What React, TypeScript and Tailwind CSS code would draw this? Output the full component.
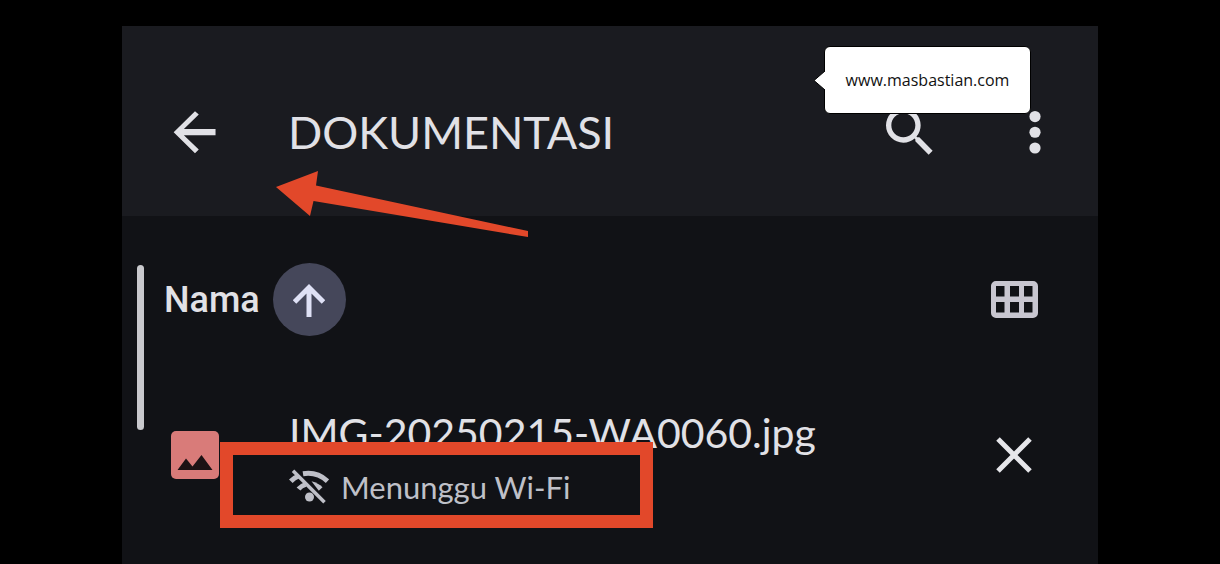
interface FileItem {
  name: string;
  status: string;
}

const FILES: FileItem[] = [{ name: 'IMG-20250215-WA0060.jpg', status: 'Menunggu Wi-Fi' }];

function ArrowBackIcon() {
  return (
    <svg className="size-16" viewBox="0 0 24 24" fill="currentColor" aria-hidden="true">
      <path d="M19.7 10.900H7.83l5.59-5.490L12 4.200l-8 7.900 8 7.900 1.41-1.41L7.83 13.200H19.7z" />
    </svg>
  );
}

function SearchIcon() {
  return (
    <svg className="size-16" viewBox="0 0 24 24" fill="currentColor" aria-hidden="true">
      <path d="M15.5 14h-.79l-.28-.27A6.471 6.471 0 0 0 16 9.5 6.5 6.5 0 1 0 9.5 16c1.61 0 3.09-.59 4.23-1.57l.27.28v.79l5 4.99L20.49 19l-4.99-5zm-6 0C7.01 14 5 11.99 5 9.5S7.01 5 9.5 5 14 7.01 14 9.5 11.99 14 9.5 14z" />
    </svg>
  );
}

function MoreIcon() {
  return (
    <svg className="size-16" viewBox="0 0 24 24" fill="currentColor" aria-hidden="true">
      <circle cx="12" cy="6.200" r="2.100" />
      <circle cx="12" cy="12.100" r="2.100" />
      <circle cx="12" cy="18" r="2.100" />
    </svg>
  );
}

function ArrowUpIcon() {
  return (
    <svg className="h-[34px] w-8" viewBox="0 0 32 34" fill="none" stroke="currentColor" strokeWidth="5" aria-hidden="true">
      <path d="M16 34V4M1.500 19L16 4.500L30.500 19" />
    </svg>
  );
}

function GridIcon() {
  return (
    <svg className="h-[38px] w-12" viewBox="0 0 48 38" fill="currentColor" aria-hidden="true">
      <path
        fillRule="evenodd"
        d="M6 0h37a5 5 0 0 1 5 5v27a5 5 0 0 1-5 5H6a5 5 0 0 1-5-5V5a5 5 0 0 1 5-5zM6 5v10.500h8.500V5zM20 5v10.500h9V5zM34 5v10.500h8.500V5zM6 21v10.500h8.500V21zM20 21v10.500h9V21zM34 21v10.500h8.500V21z"
      />
    </svg>
  );
}

function CloseIcon() {
  return (
    <svg className="size-9" viewBox="0 0 36 36" fill="none" stroke="currentColor" strokeWidth="5" aria-hidden="true">
      <path d="M2 2l32 32M34 2L2 34" />
    </svg>
  );
}

function ImageIcon() {
  return (
    <svg className="size-12" viewBox="0 0 48 48" aria-hidden="true">
      <rect width="48" height="48" rx="5" fill="#d97b79" />
      <path d="M6.500 39l8.500-11.500 6.500 8L30.500 24 41.500 39z" fill="#1c1214" />
    </svg>
  );
}

function WifiOffIcon() {
  return (
    <svg className="h-9 w-10" viewBox="0 0 40 36" aria-hidden="true">
      <g fill="none" stroke="currentColor" strokeWidth="5">
        <path d="M14 4.800Q28 2.500 38.500 12.200" />
        <path d="M1.800 12.200Q5 8.800 9.500 7" />
        <path d="M9.500 20Q12 17 16.500 15.500" />
      </g>
      <path d="M22.500 12.200Q29.500 14 33.500 18.200L29.800 21.800z" fill="currentColor" />
      <circle cx="20.500" cy="28" r="4.500" fill="currentColor" />
      <path d="M4 1.800L35.500 33.300" stroke="currentColor" strokeWidth="3.500" />
    </svg>
  );
}

function Callout() {
  return (
    <div className="absolute top-5 right-[67px] flex h-[68px] w-[207px] items-center justify-center rounded-md border border-black bg-white">
      <svg className="absolute top-[21px] -left-3 h-6 w-3" viewBox="0 0 12 24" aria-hidden="true">
        <path d="M12 3L1 12.500L12 22z" fill="#fff" />
        <path d="M12 3L1 12.500L12 22" fill="none" stroke="#000" strokeWidth="1" />
      </svg>
      <a href="#site" className="font-['Open_Sans',sans-serif] text-base text-[#111111]">
        www.masbastian.com
      </a>
    </div>
  );
}

function FileRow({ file }: { file: FileItem }) {
  return (
    <li className="relative flex items-center">
      <ImageIcon />
      <div className="ml-[70px] flex-1 pt-1">
        <p className="text-[41px] leading-[60px] whitespace-nowrap text-[#e1e1e6]">{file.name}</p>
        <p className="flex items-center gap-3 text-[31px] leading-[48px] whitespace-nowrap text-[#bfc0c8]">
          <WifiOffIcon />
          {file.status}
        </p>
      </div>
      <button type="button" className="mr-1.5 text-[#e6e6ea]" aria-label="Batalkan">
        <CloseIcon />
      </button>
      <div className="pointer-events-none absolute top-[43px] left-[49px] h-[86px] w-[433px] border-[13px] border-[#e2482a]" />
    </li>
  );
}

export default function App() {
  return (
    <div className="min-h-screen bg-black px-[10%] pt-[26px] font-['Lato',sans-serif]">
      <div className="relative flex min-h-[calc(100vh-26px)] flex-col bg-[#111216]">
        <header className="flex items-center bg-[#1a1b20] pt-[74px] pr-[31px] pb-[52px] pl-[41px] text-[#e1e1e6]">
          <button type="button" aria-label="Kembali">
            <ArrowBackIcon />
          </button>
          <h1 className="ml-[61px] flex-1 text-[45px] leading-[64px]">DOKUMENTASI</h1>
          <div className="flex gap-[61px]">
            <button type="button" aria-label="Telusuri">
              <SearchIcon />
            </button>
            <button type="button" aria-label="Opsi lainnya">
              <MoreIcon />
            </button>
          </div>
        </header>

        <main className="flex flex-1 items-start pt-[47px] pr-[60px] pl-[15px]">
          <div className="mt-0.5 h-[165px] w-[7px] rounded-full bg-[#c9c9cd]" />
          <div className="ml-5 flex-1">
            <div className="flex items-center justify-between">
              <button type="button" className="flex items-center gap-[13px] text-[#e1e1e6]">
                <span className="font-['Roboto',sans-serif] text-4xl font-medium">Nama</span>
                <span className="flex size-[73px] items-center justify-center rounded-full bg-[#45475a] text-[#dfe1f5]">
                  <ArrowUpIcon />
                </span>
              </button>
              <button type="button" className="text-[#c8c6d0]" aria-label="Tampilan petak">
                <GridIcon />
              </button>
            </div>
            <ul className="mt-[63px] ml-[7px]">
              {FILES.map((file) => (
                <FileRow key={file.name} file={file} />
              ))}
            </ul>
          </div>
        </main>

        {/* Pointer arrow over the header */}
        <svg
          className="pointer-events-none absolute top-[145px] left-[154px] h-[67px] w-[253px]"
          viewBox="0 0 253 67"
          aria-hidden="true"
        >
          <path d="M0 16L42 0L40 14.500L252 60V66L37.500 30L34 45z" fill="#e2482a" />
        </svg>
        <Callout />
      </div>
    </div>
  );
}
